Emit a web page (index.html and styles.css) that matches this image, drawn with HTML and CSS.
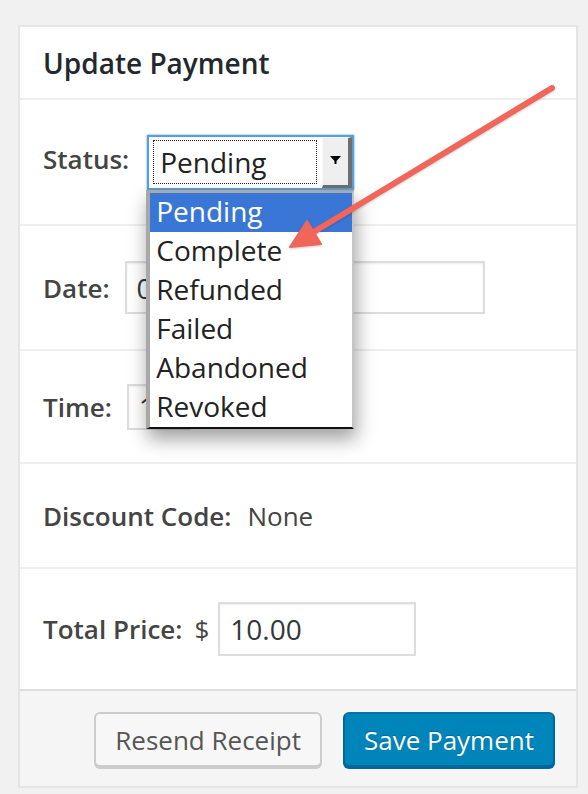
FILE: index.html
```html
<!DOCTYPE html>
<html lang="en">
<head>
<meta charset="utf-8">
<title>Update Payment</title>
<link rel="stylesheet" href="styles.css">
</head>
<body>
<div class="panel">
  <div class="panel-head">
    <h2 class="title">Update Payment</h2>
  </div>

  <div class="row row-status">
    <span class="label label-status">Status:</span>
    <div class="select-wrap">
      <div class="select">
        <span class="select-focus"><span class="select-value">Pending</span></span>
        <span class="select-btn">
          <svg class="caret" width="11" height="8" viewBox="0 0 11 8"><polygon points="0,0 11,0 6.5,5 6.5,8 4.5,8 4.5,5" fill="#000"/></svg>
        </span>
      </div>
      <ul class="options">
        <li class="option is-active">Pending</li>
        <li class="option">Complete</li>
        <li class="option">Refunded</li>
        <li class="option">Failed</li>
        <li class="option">Abandoned</li>
        <li class="option">Revoked</li>
      </ul>
    </div>
  </div>

  <div class="row row-date">
    <span class="label">Date:</span>
    <div class="field field-date">07/10/2015</div>
  </div>

  <div class="row row-time">
    <span class="label">Time:</span>
    <div class="field field-time">10</div>
  </div>

  <div class="row row-discount">
    <span class="label">Discount Code:</span>
    <span class="value">None</span>
  </div>

  <div class="row row-total">
    <span class="label">Total Price:</span>
    <span class="value currency">$</span>
    <div class="field field-total">10.00</div>
  </div>

  <div class="footer">
    <button class="btn btn-secondary" type="button">Resend Receipt</button>
    <button class="btn btn-primary" type="button">Save Payment</button>
  </div>
</div>

<svg class="annotation" width="588" height="794" viewBox="0 0 588 794">
  <line x1="552" y1="88" x2="312" y2="233" stroke="#f0665a" stroke-width="6" stroke-linecap="round"/>
  <polygon points="290,247 307,221 321,244" fill="#f0665a" stroke="#f0665a" stroke-width="2" stroke-linejoin="round"/>
</svg>
</body>
</html>
```

FILE: styles.css
```css
* { box-sizing: border-box; }

html, body {
  margin: 0;
  padding: 0;
  background: #f1f1f1;
  font-family: "Open Sans", "Noto Sans", "Liberation Sans", sans-serif;
  color: #444;
}

body {
  width: 588px;
  height: 794px;
  overflow: hidden;
  position: relative;
  padding-top: 25px;
  padding-left: 18px;
}

.panel {
  width: 560px;
  height: 763px;
  background: #fff;
  border: 2px solid #e5e5e5;
  display: flex;
  flex-direction: column;
}

.panel-head {
  height: 73px;
  border-bottom: 2px solid #eee;
  display: flex;
  align-items: center;
  padding-left: 23px;
}

.title {
  margin: 0;
  font-size: 28px;
  font-weight: 600;
  line-height: 38px;
  color: #23282d;
}

.row {
  display: flex;
  align-items: center;
  padding-left: 23px;
  border-bottom: 2px solid #eee;
}

.row-status { height: 126px; gap: 18px; }
.row-date { height: 125px; gap: 15px; }
.row-time { height: 113px; gap: 15px; }
.row-discount { height: 105px; gap: 16px; }
.row-total { height: 120px; gap: 12px; border-bottom: none; }

.label {
  font-size: 26px;
  font-weight: 600;
  line-height: 36px;
  color: #444;
}

.label-status { margin-bottom: 6px; }

.value {
  font-size: 26px;
  line-height: 36px;
  color: #444;
}

.currency { margin-right: -3px; }

/* select */
.select-wrap {
  position: relative;
}

.select {
  width: 207px;
  height: 55px;
  border: 2px solid #5b9dd9;
  box-shadow: 0 0 2px rgba(30, 140, 190, 0.8);
  background: #fff;
  display: flex;
  align-items: stretch;
}

.select-focus {
  flex: 1;
  margin: 3px 5px 4px 4px;
  border: 1px dotted #222;
  display: flex;
  align-items: center;
  padding-left: 6px;
}

.select-value {
  font-size: 28px;
  line-height: 42px;
  color: #222;
}

.select-btn {
  width: 30px;
  background: #efefef;
  border-style: solid;
  border-width: 1px 4px 3px 1px;
  border-color: #fafafa #6f6f6f #6f6f6f #fafafa;
  display: flex;
  align-items: center;
  justify-content: center;
}

.caret {
  display: block;
  margin-bottom: 2px;
}

.options {
  position: absolute;
  z-index: 5;
  top: 55px;
  left: -1px;
  width: 208px;
  margin: 0;
  padding: 0;
  list-style: none;
  background: #fff;
  border-style: solid;
  border-width: 3px 2px 2px 4px;
  border-color: #a8a8a8 #c4c4c4 #111 #a8a8a8;
  box-shadow: 2px 10px 18px rgba(0, 0, 0, 0.38);
}

.option {
  height: 39px;
  line-height: 36px;
  padding-left: 6px;
  font-size: 28px;
  color: #222;
}

.option.is-active {
  background: #3a76d6;
  color: #fff;
}

/* inputs */
.field {
  background: #fff;
  border: 2px solid #ddd;
  box-shadow: inset 0 1px 2px rgba(0, 0, 0, 0.07);
  font-size: 28px;
  color: #32373c;
  display: flex;
  align-items: center;
  padding-left: 10px;
}

.field-date { width: 360px; height: 53px; }
.field-time { width: 64px; height: 46px; }
.field-total { width: 198px; height: 54px; }

/* footer */
.footer {
  flex: 1;
  background: #f5f5f5;
  border-top: 2px solid #ddd;
  display: flex;
  justify-content: flex-end;
  align-items: flex-start;
  gap: 21px;
  padding: 21px 21px 0 0;
}

.btn {
  height: 55px;
  padding: 0 19px;
  border-radius: 6px;
  border: 2px solid;
  font-family: "Open Sans", "Noto Sans", "Liberation Sans", sans-serif;
  font-size: 26px;
  line-height: 50px;
  cursor: pointer;
}

.btn-secondary {
  background: #f7f7f7;
  border-color: #ccc;
  color: #555;
  box-shadow: 0 2px 0 #ccc;
}

.btn-primary {
  background: #0085ba;
  border-color: #0073aa #006799 #006799;
  color: #fff;
  box-shadow: 0 2px 0 #006799;
  text-shadow: 0 -1px 1px #006799;
}

.annotation {
  position: absolute;
  top: 0;
  left: 0;
  z-index: 10;
  pointer-events: none;
  filter: drop-shadow(0 1px 1px rgba(0, 0, 0, 0.2));
}
```
